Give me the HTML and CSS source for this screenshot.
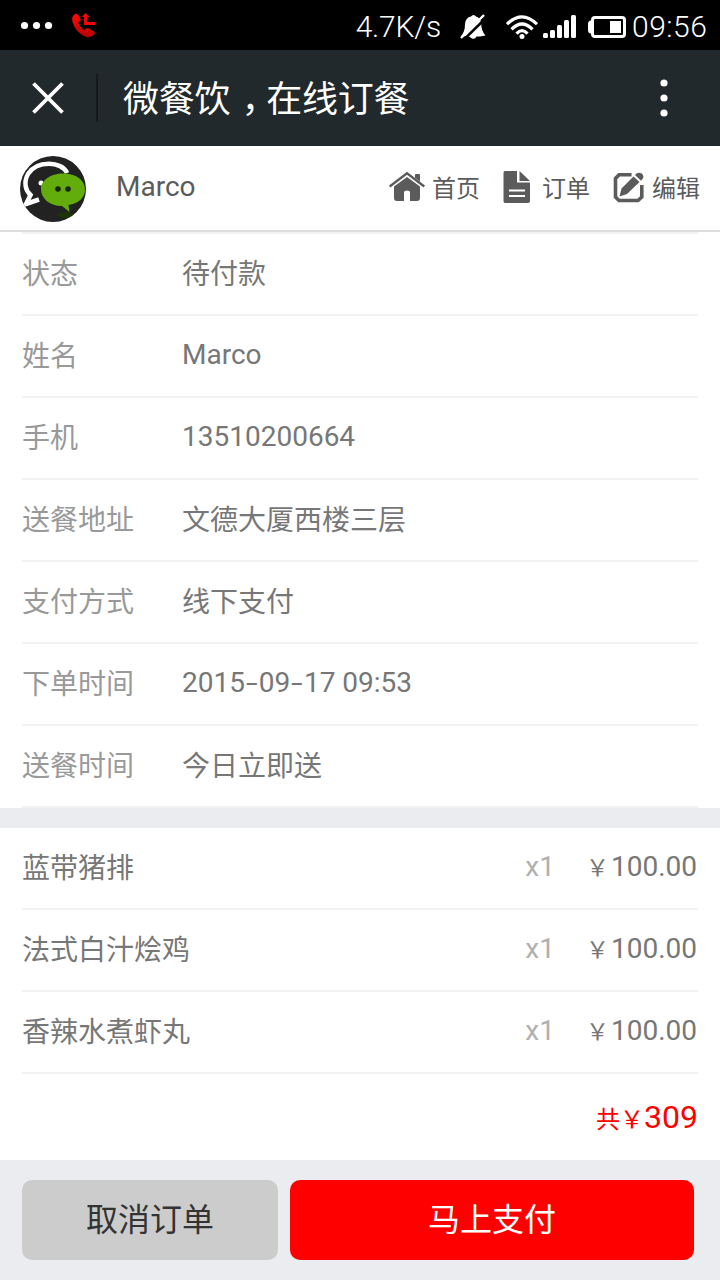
FILE: index.html
```html
<!DOCTYPE html>
<html lang="zh-CN">
<head>
    <meta charset="UTF-8">
    <meta name="viewport" content="width=device-width, initial-scale=1.0">
    <title>微餐饮，在线订餐</title>
    <link rel="stylesheet" href="styles.css">
</head>
<body>
    <!-- 状态栏 -->
    <div class="status-bar">
        <svg class="status-left" width="80" height="50" viewBox="0 0 80 50">
            <g fill="#fff">
                <circle cx="4.5" cy="25.5" r="3.6"/>
                <circle cx="16.5" cy="25.5" r="3.6"/>
                <circle cx="28.5" cy="25.5" r="3.6"/>
            </g>
            <defs>
                <linearGradient id="phone-red" x1="0" y1="0" x2="0" y2="1">
                    <stop offset="0" stop-color="#ff0a0a"/>
                    <stop offset="1" stop-color="#b80000"/>
                </linearGradient>
            </defs>
            <path fill="url(#phone-red)" d="M55 14 Q57 13 58.500 15.500 L60.600 19 Q61 20.500 59.500 21.500 L58.300 22.500 Q59.500 27 64.500 30 L66.500 28.200 Q68 27.400 69.500 28.700 L74.500 32 Q75.500 33 74 34.500 Q70.500 38.500 65 36.500 Q55.500 32 52.500 22 Q51 16.500 55 14Z"/>
            <path fill="#f00505" d="M65.500 13 L69.500 17 H67 V22 H75 V25 H64 V17 H61.500Z"/>
        </svg>
        <div class="status-right">
            <span class="net-speed">4.7K/s</span>
            <svg class="bell" width="26" height="26" viewBox="0 0 26 26">
                <path fill="#fff" d="M1 22 Q5 18 5 10 Q5.500 3.500 11 2.500 Q12 1 13.500 1 Q15 1 16 2.500 Q20 3.500 21 8 Q21.500 18 25.500 21.500 L20 22.500 H16.500 Q15 25.500 12 24.500 L9 22.500Z"/>
                <path stroke="#000" stroke-width="2.600" d="M4 25.500 L26 4"/>
                <path stroke="#fff" stroke-width="2.400" d="M1 24 L24 1"/>
            </svg>
            <svg class="wifi" width="32" height="24" viewBox="0 0 32 24">
                <g fill="none" stroke="#fff" stroke-width="3.200">
                    <path d="M1 9.200 Q16 -5.500 31 9.200"/>
                    <path d="M5.500 14.300 Q16 3.800 26.500 14.300"/>
                    <path d="M10.500 18.700 Q16 12.700 21.500 18.700"/>
                </g>
                <circle fill="#fff" cx="16" cy="21.500" r="2.500"/>
            </svg>
            <svg class="signal" width="33" height="24" viewBox="0 0 33 24">
                <g fill="#fff">
                    <rect x="0" y="18" width="5" height="5" rx="1.500"/>
                    <rect x="7" y="15" width="5" height="8" rx="1.500"/>
                    <rect x="14" y="10" width="5" height="13" rx="1.500"/>
                    <rect x="21" y="5" width="5" height="18" rx="1.500"/>
                    <rect x="28" y="0" width="5" height="23" rx="1.500"/>
                </g>
            </svg>
            <svg class="battery" width="38" height="22" viewBox="0 0 38 22">
                <rect x="4.500" y="1.500" width="32" height="19" rx="2.500" fill="none" stroke="#fff" stroke-width="3"/>
                <path fill="#fff" d="M4 4.500 H2.500 Q0 5 0 8 V14 Q0 17 2.500 17.500 H4Z"/>
                <rect x="22" y="5" width="11" height="12" fill="#fff"/>
            </svg>
            <span class="clock">09:56</span>
        </div>
    </div>

    <!-- 标题栏 -->
    <header class="title-bar">
        <svg class="close" width="32" height="32" viewBox="0 0 32 32">
            <path stroke="#fff" stroke-width="3.800" d="M1.500 1.500 L30.500 30.500 M30.500 1.500 L1.500 30.500"/>
        </svg>
        <span class="divider"></span>
        <h1>微餐饮<span class="comma">，</span>在线订餐</h1>
        <svg class="more" width="8" height="38" viewBox="0 0 8 38">
            <g fill="#fff">
                <circle cx="4" cy="4" r="3.600"/>
                <circle cx="4" cy="19" r="3.600"/>
                <circle cx="4" cy="34" r="3.600"/>
            </g>
        </svg>
    </header>

    <!-- 用户和导航 -->
    <div class="user-bar">
        <svg class="avatar" width="66" height="66" viewBox="0 0 66 66">
            <defs>
                <clipPath id="round"><circle cx="33" cy="33" r="33"/></clipPath>
            </defs>
            <g clip-path="url(#round)">
                <rect width="66" height="66" fill="#222"/>
                <path fill="none" stroke="#fff" stroke-width="4.500" d="M47 17 C42 5 17 4 8 18 C3 27 6 35 10.500 39 L6 48 L19 43.500"/>
                <circle cx="21" cy="27" r="2.500" fill="#fff"/>
                <ellipse cx="46" cy="59" rx="9" ry="3" fill="#1c3505"/>
                <path fill="#62ac0b" d="M43 17.500 C56 17.500 65 24 65 33.500 C65 42 58 47.500 48.500 49 L49.500 56 L42 50 C29 50 21 42 21 33 C21 24 31 17.500 43 17.500Z"/>
                <circle cx="38" cy="33" r="2.800" fill="#182805"/>
                <circle cx="48" cy="33" r="2.800" fill="#182805"/>
            </g>
        </svg>
        <span class="user-name">Marco</span>
        <nav class="nav">
            <a class="nav-item">
                <svg width="36" height="32" viewBox="0 0 36 32">
                    <path fill="none" stroke="#5b5b5b" stroke-width="2.300" d="M.7 15.500 L18 2.300 L35.300 15.500"/>
                    <path fill="#5b5b5b" d="M26 4.500 V4 Q26 3 27 3 H30 Q31 3 31 4 V10.500 L26 6.700Z"/>
                    <path fill="#5b5b5b" d="M5 15.500 L18 6 L31 15.500 V27 Q31 30 28 30 H21 V21.500 Q21 19.500 18 19.500 Q15 19.500 15 21.500 V30 H8 Q5 30 5 27Z"/>
                </svg>
                <span>首页</span>
            </a>
            <a class="nav-item">
                <svg width="28" height="32" viewBox="0 0 28 32">
                    <path fill="#5b5b5b" d="M2 0 H14 V11.500 H27 V30 Q27 32 25 32 H2 Q.5 32 .5 30 V2 Q.5 0 2 0Z"/>
                    <path fill="#5b5b5b" d="M16.500 0 L27 10 H16.500Z"/>
                    <path stroke="#fff" stroke-width="2" d="M6 19.500 H22 M6 25 H22"/>
                </svg>
                <span>订单</span>
            </a>
            <a class="nav-item">
                <svg width="32" height="32" viewBox="0 0 32 32">
                    <path fill="none" stroke="#5b5b5b" stroke-width="3.600" d="M18.500 3.800 H6 L2.500 7.500 V26 L6 29.500 H25 L28.800 26 V14"/>
                    <path fill="#5b5b5b" d="M6.500 25.500 L8.500 17.500 L20.500 5.500 L26.500 11 L14 23Z"/>
                    <path fill="#5b5b5b" d="M22 4 L23.500 2.500 Q26.500 .5 29.300 3.100 Q31.500 6 29.500 8 L28 9.700Z"/>
                </svg>
                <span>编辑</span>
            </a>
        </nav>
    </div>

    <!-- 订单信息 -->
    <div class="panel details">
        <div class="row"><span class="label">状态</span><span class="value cn">待付款</span></div>
        <div class="row"><span class="label">姓名</span><span class="value">Marco</span></div>
        <div class="row"><span class="label">手机</span><span class="value">13510200664</span></div>
        <div class="row"><span class="label">送餐地址</span><span class="value cn">文德大厦西楼三层</span></div>
        <div class="row"><span class="label">支付方式</span><span class="value cn">线下支付</span></div>
        <div class="row"><span class="label">下单时间</span><span class="value">2015<span class="dash">-</span>09<span class="dash">-</span>17 09:53</span></div>
        <div class="row"><span class="label">送餐时间</span><span class="value cn">今日立即送</span></div>
    </div>

    <!-- 菜品 -->
    <div class="panel dishes">
        <div class="row"><span class="dish">蓝带猪排</span><span class="count">x1</span><span class="price"><small>￥</small>100.00</span></div>
        <div class="row"><span class="dish">法式白汁烩鸡</span><span class="count">x1</span><span class="price"><small>￥</small>100.00</span></div>
        <div class="row"><span class="dish">香辣水煮虾丸</span><span class="count">x1</span><span class="price"><small>￥</small>100.00</span></div>
        <div class="total"><small>共￥</small>309</div>
    </div>

    <div class="actions">
        <button class="btn cancel">取消订单</button>
        <button class="btn pay">马上支付</button>
    </div>
</body>
</html>
```
FILE: styles.css
```css
* {
    box-sizing: border-box;
}

body {
    margin: 0;
    width: 720px;
    height: 1280px;
    overflow: hidden;
    background-color: #ebecf0;
    font-family: Roboto, "Noto Sans CJK SC", sans-serif;
    font-size: 28px;
    color: #777;
}

svg {
    display: block;
    flex: none;
}

/* 状态栏 */
.status-bar {
    display: flex;
    justify-content: space-between;
    height: 50px;
    padding: 0 12px 0 20px;
    background-color: #000;
    color: #fff;
}

.status-right {
    display: flex;
    align-items: center;
    padding-top: 3px;
    font-size: 30px;
    font-weight: 300;
}

.net-speed {
    letter-spacing: -0.2px;
}

.bell {
    margin-left: 19px;
}

.wifi {
    margin-left: 20px;
}

.signal {
    margin-left: 5px;
}

.battery {
    margin: 0 6px 0 12px;
}

.clock {
    width: 76px;
    white-space: nowrap;
    letter-spacing: 0.5px;
}

/* 标题栏 */
.title-bar {
    display: flex;
    align-items: center;
    height: 96px;
    padding: 0 52px 0 32px;
    background-color: #22292c;
    color: #fff;
}

.divider {
    width: 2px;
    height: 48px;
    margin: 0 25px 0 32px;
    background-color: #14191a;
}

.title-bar h1 {
    flex: 1;
    margin: 0;
    padding-top: 4px;
    font-size: 36px;
    font-weight: normal;
    line-height: 92px;
    letter-spacing: -0.2px;
}

.comma {
    padding: 0 7px 0 11px;
    font-feature-settings: "halt";
}

/* 用户和导航 */
.user-bar {
    display: flex;
    align-items: center;
    height: 86px;
    padding: 1px 20px 0;
    background-color: #fff;
    border-bottom: 2px solid #ddd;
    color: #5b5b5b;
}

.avatar {
    margin-top: 1px;
}

.user-name {
    margin-left: 30px;
    margin-top: -4px;
}

.nav {
    display: flex;
    gap: 23px;
    margin-left: auto;
    margin-top: -3px;
}

.nav-item {
    display: flex;
    align-items: center;
    gap: 7px;
    height: 36px;
    font-size: 24px;
}

.nav-item span {
    margin-top: -1px;
}

.nav-item:nth-child(2) {
    gap: 11px;
}

/* 列表 */
.panel {
    padding: 0 22px;
    background-color: #fff;
}

.details .row:first-child {
    height: 84px;
    border-top: 2px solid #f2f2f2;
}

.dishes {
    height: 332px;
    margin-top: 20px;
}

.row {
    display: flex;
    align-items: center;
    height: 82px;
    padding-bottom: 3px;
    border-bottom: 2px solid #f2f2f2;
}

.label,
.dish,
.cn {
    padding-bottom: 2px;
}

.label {
    width: 160px;
    color: #999;
}

.dash {
    display: inline-block;
    margin: 0 3px;
    transform: scaleX(1.5);
}

.dish {
    flex: 1;
}

.count {
    color: #b0b0b0;
}

.price {
    width: 143px;
    padding: 0 1px 2px 0;
    text-align: right;
}

.price small,
.total small {
    font-size: 24px;
}

.price small {
    font-size: 23px;
    margin-right: 2px;
}

.total {
    height: 86px;
    line-height: 86px;
    font-size: 32px;
    text-align: right;
    color: #f00;
}

/* 按钮 */
.actions {
    display: flex;
    gap: 12px;
    padding: 20px 26px 20px 22px;
}

.btn {
    height: 80px;
    padding: 0 0 6px;
    border: none;
    border-radius: 10px;
    font-family: inherit;
    font-size: 32px;
}

.cancel {
    width: 256px;
    background-color: #ccc;
    color: #333;
}

.pay {
    flex: 1;
    background-color: #f00;
    color: #fff;
}
```
